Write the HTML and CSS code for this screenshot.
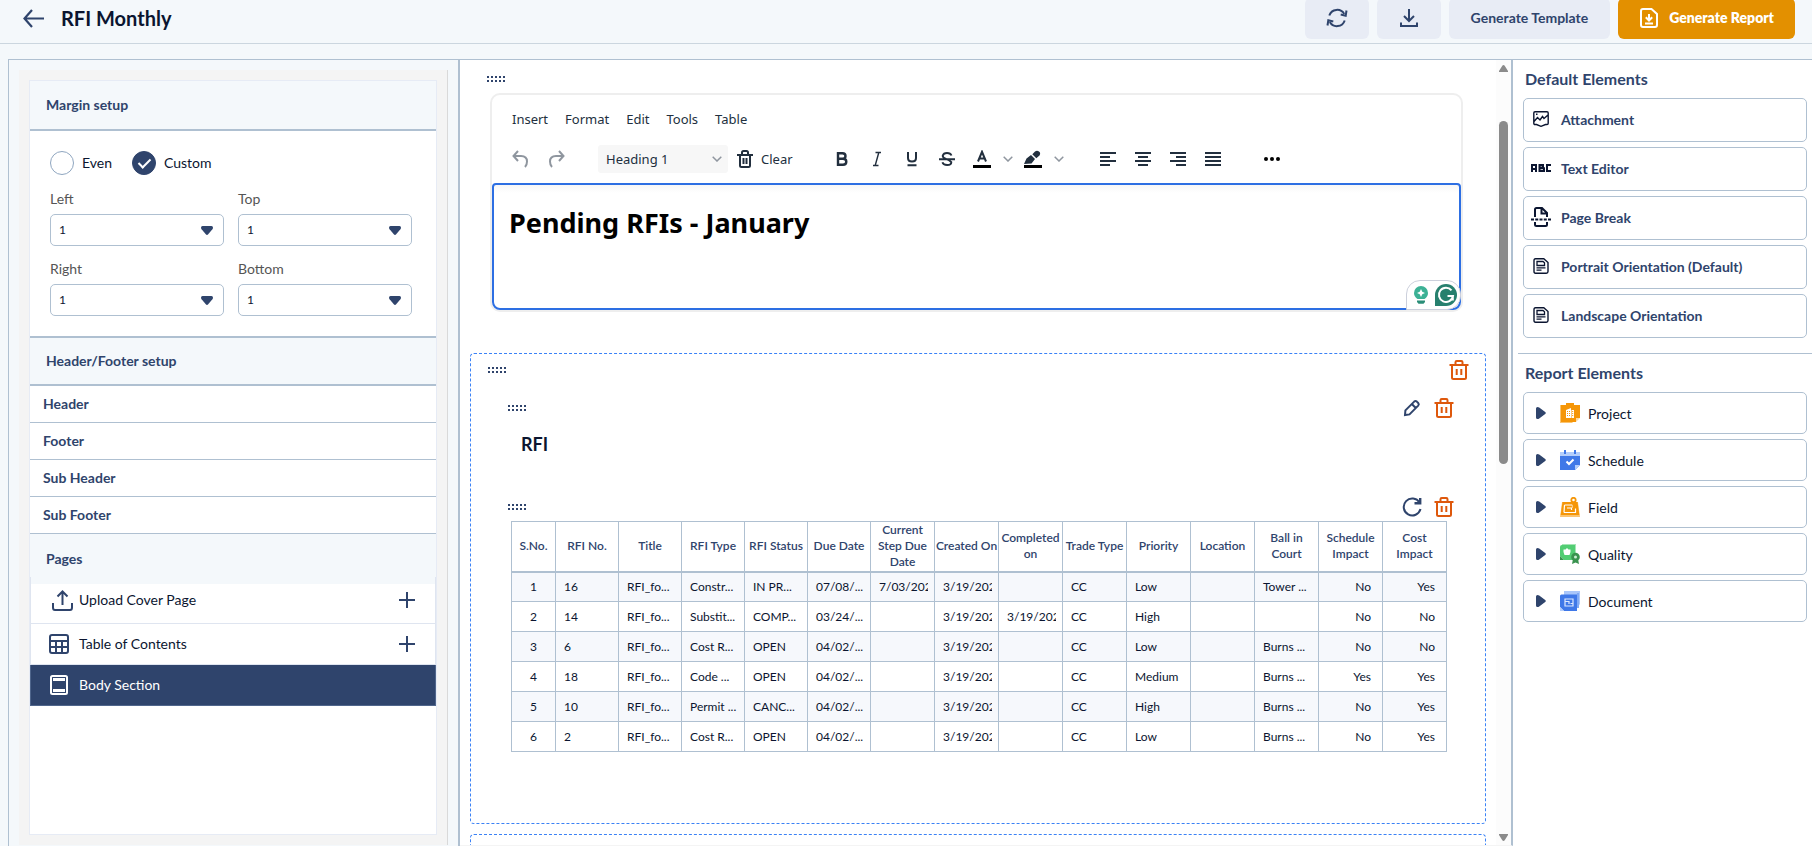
FILE: index.html
```html
<!DOCTYPE html>
<html lang="en">
<head>
  <meta charset="UTF-8" />
  <meta name="viewport" content="width=device-width, initial-scale=1.0" />
  <title>RFI Monthly</title>
  <link rel="stylesheet" href="styles.css">
</head>
<body>
  <!-- Shared icons -->
  <svg class="sprite" aria-hidden="true">
    <symbol id="i-drag" viewBox="0 0 18 6">
      <path d="M0 0h2v2H0zM4 0h2v2H4zM8 0h2v2H8zM12 0h2v2h-2zM16 0h2v2h-2zM0 4h2v2H0zM4 4h2v2H4zM8 4h2v2H8zM12 4h2v2h-2zM16 4h2v2h-2z" fill="currentColor"/>
    </symbol>
    <symbol id="i-trash" viewBox="0 0 20 20">
      <path d="M.5 5h19M6.500 5V2.200Q6.500 1 7.700 1h4.600q1.200 0 1.200 1.200V5M3 5v12.500Q3 19 4.500 19h11q1.500 0 1.500-1.500V5M7.700 9v6M12.300 9v6" fill="none" stroke="currentColor" stroke-width="2"/>
    </symbol>
    <symbol id="i-caret" viewBox="0 0 12 9">
      <path d="M1.500 0h9Q12 0 12 1.500q0 1-.6 1.800L7.200 8.300Q6 9.600 4.800 8.300L.6 3.300Q0 2.500 0 1.500 0 0 1.500 0z" fill="currentColor"/>
    </symbol>
    <symbol id="i-play" viewBox="0 0 10 12">
      <path d="M0 1.500Q0 0 1.500 0q1 0 1.700.6L9.200 5Q10.400 6 9.200 7L3.200 11.400Q2.500 12 1.500 12 0 12 0 10.500z" fill="currentColor"/>
    </symbol>
    <symbol id="i-chev" viewBox="0 0 10 6">
      <path d="M.7.700 5 5 9.300.7" fill="none" stroke="currentColor" stroke-width="1.500"/>
    </symbol>
    <symbol id="i-plus" viewBox="0 0 16 16">
      <path d="M8 0v16M0 8h16" stroke="currentColor" stroke-width="2"/>
    </symbol>
    <symbol id="i-page" viewBox="0 0 16 16">
      <path d="M2.500.8h8.300L15 4.500v9q0 1.700-1.700 1.700H2.500Q1 15.200 1 13.500v-11Q1 .8 2.500.8z" fill="none" stroke="currentColor" stroke-width="1.400"/>
      <path d="M4 3.500h6l1.500 1.300v2.700H4zM3.500 9.800h9M3.500 12.200h5" fill="none" stroke="currentColor" stroke-width="1.300"/>
    </symbol>
  </svg>

  <header class="topbar">
    <button class="back" aria-label="Back">
      <svg width="21" height="19" viewBox="0 0 21 19"><path d="M9 1 1.500 9.500 9 18M1.500 9.500H21" fill="none" stroke="currentColor" stroke-width="2.200"/></svg>
    </button>
    <h1 class="title">RFI Monthly</h1>
    <button class="btn btn-icon" aria-label="Refresh">
      <svg width="22" height="20" viewBox="0 0 22 20" fill="none" stroke="currentColor" stroke-width="2"><path d="M3.300 7.500A8.200 8.200 0 0 1 18.200 6M18.700 12.500A8.200 8.200 0 0 1 3.800 14"/><path d="M20.500 2.500 19.700 7.700 14.700 6.600M1.500 17.500l.8-5.200 5 1.100"/></svg>
    </button>
    <button class="btn btn-icon" aria-label="Download">
      <svg width="18" height="18" viewBox="0 0 18 18" fill="none" stroke="currentColor" stroke-width="2"><path d="M9 0v11.500M4 7l5 5 5-5M1 13.500V17h16v-3.500"/></svg>
    </button>
    <button class="btn">Generate Template</button>
    <button class="btn btn-report">
      <svg width="18" height="20" viewBox="0 0 18 20" fill="none" stroke="currentColor" stroke-width="2"><path d="M3 1h8.500L17 6v11q0 2-2 2H3q-2 0-2-2V3q0-2 2-2z"/><path d="M9 6v6M5.800 9.300 9 12.500l3.200-3.200M5 15.500h8"/></svg>
      Generate Report
    </button>
  </header>

  <div class="workspace">
    <aside class="setup">
      <div class="setup-inner">
        <div class="card">
          <h2 class="card-head ruled">Margin setup</h2>
          <form class="margins">
            <div class="radios">
              <input type="radio" name="margin" id="r-even" value="even"><label for="r-even">Even</label>
              <input type="radio" name="margin" id="r-custom" value="custom" checked><label for="r-custom">Custom</label>
            </div>
            <div class="fields">
              <div class="field">
                <label for="m-left">Left</label>
                <div class="select"><select id="m-left"><option>1</option></select><svg width="12" height="9"><use href="#i-caret"/></svg></div>
              </div>
              <div class="field">
                <label for="m-top">Top</label>
                <div class="select"><select id="m-top"><option>1</option></select><svg width="12" height="9"><use href="#i-caret"/></svg></div>
              </div>
              <div class="field">
                <label for="m-right">Right</label>
                <div class="select"><select id="m-right"><option>1</option></select><svg width="12" height="9"><use href="#i-caret"/></svg></div>
              </div>
              <div class="field">
                <label for="m-bottom">Bottom</label>
                <div class="select"><select id="m-bottom"><option>1</option></select><svg width="12" height="9"><use href="#i-caret"/></svg></div>
              </div>
            </div>
          </form>
          <h2 class="card-head ruled low">Header/Footer setup</h2>
          <button class="part">Header</button>
          <button class="part">Footer</button>
          <button class="part">Sub Header</button>
          <button class="part">Sub Footer</button>
          <h2 class="card-head tall">Pages</h2>
          <ul class="pages">
            <li class="page-row first">
              <svg class="upload" width="21" height="21" viewBox="0 0 21 21" fill="none" stroke="currentColor" stroke-width="2"><path d="M10.500 15V2M5.500 6.500l5-5 5 5M1 13v4.500Q1 20 3 20h15q2 0 2-2.500V13"/></svg>
              <span>Upload Cover Page</span>
              <button aria-label="Add cover page"><svg width="16" height="16"><use href="#i-plus"/></svg></button>
            </li>
            <li class="page-row">
              <svg width="20" height="20" viewBox="0 0 20 20" fill="none" stroke="currentColor" stroke-width="2"><rect x="1" y="1" width="18" height="18" rx="2"/><path d="M1 7h18M1 13h18M7 7v12M13 7v12"/></svg>
              <span>Table of Contents</span>
              <button aria-label="Add table of contents"><svg width="16" height="16"><use href="#i-plus"/></svg></button>
            </li>
            <li class="page-row active">
              <svg width="20" height="20" viewBox="0 0 20 20"><rect x="2" y="1" width="16" height="18" rx="1.500" fill="none" stroke="currentColor" stroke-width="2"/><path d="M4 3h12v3H4zM4 14h12v3H4z" fill="currentColor"/></svg>
              <span>Body Section</span>
            </li>
          </ul>
        </div>
      </div>
    </aside>

    <main class="canvas">
      <div class="blocks">
        <svg class="drag drag-editor" width="18" height="6"><use href="#i-drag"/></svg>
        <section class="editor">
          <div class="menubar">
            <button>Insert</button><button>Format</button><button>Edit</button><button>Tools</button><button>Table</button>
          </div>
          <div class="toolbar">
            <button class="tool faded" aria-label="Undo"><svg width="16" height="18" viewBox="0 0 16 18" fill="none" stroke="currentColor" stroke-width="2"><path d="M6 1 1.500 6 6 11M1.500 6H9q6 0 6 5.500Q15 15 13 17"/></svg></button>
            <button class="tool faded redo" aria-label="Redo"><svg width="16" height="18" viewBox="0 0 16 18" fill="none" stroke="currentColor" stroke-width="2"><path d="M10 1l4.500 5L10 11M14.500 6H7Q1 6 1 11.500 1 15 3 17"/></svg></button>
            <div class="select style-select"><select aria-label="Block style"><option>Heading 1</option></select><svg width="10" height="6"><use href="#i-chev"/></svg></div>
            <button class="clear"><svg width="16" height="18" viewBox="0 0 16 18" fill="none" stroke="currentColor" stroke-width="2"><path d="M0 5h16M5 5V2.500Q5 1 6.500 1h3Q11 1 11 2.500V5M3 5v10.500Q3 17 4.500 17h7q1.500 0 1.500-1.500V5M6.500 8v6M9.500 8v6"/></svg>Clear</button>
            <button class="tool" aria-label="Bold"><svg width="16" height="16" viewBox="0 0 16 16" fill="none" stroke="currentColor" stroke-width="2.400"><path d="M4 2.200h4.500q3 0 3 2.800t-3 2.800H4zM4 7.800h5q3.300 0 3.300 3T9 13.800H4zM4 1v14"/></svg></button>
            <button class="tool" aria-label="Italic"><svg width="16" height="16" viewBox="0 0 16 16" fill="none" stroke="currentColor" stroke-width="1.400"><path d="M6.500 1.500h5.500M4 14.500h5.500M9.800 1.500 6.200 14.500"/></svg></button>
            <button class="tool" aria-label="Underline"><svg width="16" height="16" viewBox="0 0 16 16" fill="none" stroke="currentColor" stroke-width="2"><path d="M4 1v6q0 3.500 4 3.500T12 7V1M3.500 14.200h9"/></svg></button>
            <button class="tool" aria-label="Strikethrough"><svg width="16" height="16" viewBox="0 0 16 16" fill="none" stroke="currentColor" stroke-width="1.900"><path d="M12.500 4.500Q11.500 2 8 2T3.700 4.800q0 2 3.300 3t5.300 3.400Q12.300 14 8.200 14T3.500 11.300M0 8.200h16"/></svg></button>
            <button class="tool" aria-label="Text color"><svg width="18" height="18" viewBox="0 0 18 18"><path d="M5 11.500 9 1.800l4 9.700M6.300 8.500h5.400" fill="none" stroke="currentColor" stroke-width="2"/><path d="M0 15h18v3H0z" fill="#000"/></svg></button>
            <button class="arrow" aria-label="Text color options"><svg width="10" height="6"><use href="#i-chev"/></svg></button>
            <button class="tool" aria-label="Highlight"><svg width="18" height="18" viewBox="0 0 18 18"><path d="M0 14l2.500-5.500L7 5l4 4-3.500 4.500zM8.300 4.300 11 1.500Q13 0 15 1.500t.5 4L12.300 8.300z" fill="currentColor"/><path d="M0 15h18v3H0z" fill="#000"/></svg></button>
            <button class="arrow" aria-label="Highlight options"><svg width="10" height="6"><use href="#i-chev"/></svg></button>
            <button class="tool apart" aria-label="Align left"><svg width="16" height="14" viewBox="0 0 16 14"><path d="M0 0h16v2H0zM0 4h10v2H0zM0 8h16v2H0zM0 12h10v2H0z" fill="currentColor"/></svg></button>
            <button class="tool" aria-label="Align center"><svg width="16" height="14" viewBox="0 0 16 14"><path d="M0 0h16v2H0zM3 4h10v2H3zM0 8h16v2H0zM3 12h10v2H3z" fill="currentColor"/></svg></button>
            <button class="tool" aria-label="Align right"><svg width="16" height="14" viewBox="0 0 16 14"><path d="M0 0h16v2H0zM6 4h10v2H6zM0 8h16v2H0zM6 12h10v2H6z" fill="currentColor"/></svg></button>
            <button class="tool" aria-label="Justify"><svg width="16" height="14" viewBox="0 0 16 14"><path d="M0 0h16v2H0zM0 4h16v2H0zM0 8h16v2H0zM0 12h16v2H0z" fill="currentColor"/></svg></button>
            <button class="tool apart" aria-label="More"><svg width="16" height="4" viewBox="0 0 16 4"><circle cx="2" cy="2" r="2"/><circle cx="8" cy="2" r="2"/><circle cx="14" cy="2" r="2"/></svg></button>
          </div>
          <div class="content" contenteditable="true" spellcheck="false"><h1>Pending RFIs - January</h1></div>
          <div class="assist">
            <svg width="16" height="20" viewBox="0 0 16 20"><path d="M8 1a7 7 0 0 1 7 7q0 3.500-3.500 6h-7Q1 11.500 1 8a7 7 0 0 1 7-7z" fill="#3cb195"/><path d="M8 4l1.300 2.700L12 8 9.300 9.300 8 12 6.700 9.300 4 8l2.700-1.300z" fill="#fff"/><path d="M4 15.500h8v1.500l-1.500 1.800h-5L4 17z" fill="#2a8e78"/></svg>
            <svg width="22" height="22" viewBox="0 0 22 22"><path d="M11 0a11 11 0 0 1 0 22H0V11A11 11 0 0 1 11 0z" fill="#27806e"/><path d="M16.500 6.300a7.100 7.100 0 1 0 1.500 5.700h-5.500M17.800 12v4.500" fill="none" stroke="#fff" stroke-width="2"/></svg>
          </div>
        </section>

        <section class="group">
          <div class="row row-group">
            <svg class="drag" width="18" height="6"><use href="#i-drag"/></svg>
            <button class="del" aria-label="Delete group"><svg width="20" height="20"><use href="#i-trash"/></svg></button>
          </div>
          <div class="row">
            <svg class="drag" width="18" height="6"><use href="#i-drag"/></svg>
            <button aria-label="Edit"><svg width="20" height="18" viewBox="0 0 20 18" fill="none" stroke="currentColor" stroke-width="2"><path d="M3 16l.4-4.600L12.200 2.600q1.300-1.200 2.600 0l1.400 1.400q1.200 1.300 0 2.600L7.500 15.400zM9.800 5l4 4"/></svg></button>
            <button class="del" aria-label="Delete heading"><svg width="20" height="20"><use href="#i-trash"/></svg></button>
          </div>
          <h2 class="group-title">RFI</h2>
          <div class="row">
            <svg class="drag" width="18" height="6"><use href="#i-drag"/></svg>
            <button aria-label="Reload"><svg width="20" height="20" viewBox="0 0 20 20" fill="none" stroke="currentColor" stroke-width="2"><path d="M17.500 5.500A8.500 8.500 0 1 0 18.500 12"/><path d="M18.200 1v5.200h-5.700" stroke-width="2.400"/></svg></button>
            <button class="del" aria-label="Delete table"><svg width="20" height="20"><use href="#i-trash"/></svg></button>
          </div>
          <table class="report">
            <colgroup><col class="c-no"><col class="c-short" span="5"><col span="9"></colgroup>
            <thead>
              <tr><th>S.No.</th><th>RFI No.</th><th>Title</th><th>RFI Type</th><th>RFI Status</th><th>Due Date</th><th>Current Step Due Date</th><th>Created On</th><th>Completed on</th><th>Trade Type</th><th>Priority</th><th>Location</th><th>Ball in Court</th><th>Schedule Impact</th><th>Cost Impact</th></tr>
            </thead>
            <tbody>
              <tr><td>1</td><td>16</td><td>RFI_fo...</td><td>Constr...</td><td>IN PR...</td><td>07/08/...</td><td><span class="date">7/03/202</span></td><td><span class="date">3/19/202</span></td><td></td><td>CC</td><td>Low</td><td></td><td>Tower ...</td><td class="r">No</td><td class="r">Yes</td></tr>
              <tr><td>2</td><td>14</td><td>RFI_fo...</td><td>Substit...</td><td>COMP...</td><td>03/24/...</td><td></td><td><span class="date">3/19/202</span></td><td><span class="date">3/19/202</span></td><td>CC</td><td>High</td><td></td><td></td><td class="r">No</td><td class="r">No</td></tr>
              <tr><td>3</td><td>6</td><td>RFI_fo...</td><td>Cost R...</td><td>OPEN</td><td>04/02/...</td><td></td><td><span class="date">3/19/202</span></td><td></td><td>CC</td><td>Low</td><td></td><td>Burns ...</td><td class="r">No</td><td class="r">No</td></tr>
              <tr><td>4</td><td>18</td><td>RFI_fo...</td><td>Code ...</td><td>OPEN</td><td>04/02/...</td><td></td><td><span class="date">3/19/202</span></td><td></td><td>CC</td><td>Medium</td><td></td><td>Burns ...</td><td class="r">Yes</td><td class="r">Yes</td></tr>
              <tr><td>5</td><td>10</td><td>RFI_fo...</td><td>Permit ...</td><td>CANC...</td><td>04/02/...</td><td></td><td><span class="date">3/19/202</span></td><td></td><td>CC</td><td>High</td><td></td><td>Burns ...</td><td class="r">No</td><td class="r">Yes</td></tr>
              <tr><td>6</td><td>2</td><td>RFI_fo...</td><td>Cost R...</td><td>OPEN</td><td>04/02/...</td><td></td><td><span class="date">3/19/202</span></td><td></td><td>CC</td><td>Low</td><td></td><td>Burns ...</td><td class="r">No</td><td class="r">Yes</td></tr>
            </tbody>
          </table>
        </section>
        <section class="group next"></section>
      </div>
      <div class="scrollbar">
        <svg width="9" height="7" viewBox="0 0 9 7"><path d="M4.500 0Q5.200 0 5.700.8L9 6v1H0V6L3.300.8Q3.800 0 4.500 0z"/></svg>
        <div class="thumb"></div>
        <svg class="down" width="9" height="7" viewBox="0 0 9 7"><path d="M4.500 7Q5.200 7 5.700 6.200L9 1V0H0v1l3.300 5.200Q3.800 7 4.500 7z"/></svg>
      </div>
    </main>

    <aside class="elements">
      <h2>Default Elements</h2>
      <div class="stack">
        <button class="element"><svg width="16" height="16" viewBox="0 0 16 16" fill="none" stroke="currentColor" stroke-width="1.400"><path d="M3.500 13.500H2q-1.200 0-1.200-1.200V2Q.8.800 2 .8h12q1.200 0 1.200 1.200v10.300q0 1.200-1.200 1.200h-1.500L8 15.300zM1 10.500l3.500-4L7 9l2.500-3.500L11 7.500l4-3.500M3 3.300h1.500"/></svg>Attachment</button>
        <button class="element"><svg class="wide" width="20" height="8" viewBox="0 0 20 8" fill="none" stroke="currentColor" stroke-width="2"><path d="M1 8V1h4v7M1 5h4M8.500 0v8M7.500 1h4.500v2.500H9M9 4.200h4V7H7.500M20 1h-4v6h4"/></svg>Text Editor</button>
        <button class="element"><svg class="wide" width="20" height="20" viewBox="0 0 20 20" fill="none" stroke="currentColor" stroke-width="2"><path d="M4 10V2.500Q4 1 5.500 1H11l5 5v4M10.500 1v5.500H16M4 15v2.500Q4 19 5.500 19h9q1.500 0 1.500-1.500V15"/><path d="M0 12.500h20" stroke-dasharray="3 1.250"/></svg>Page Break</button>
        <button class="element"><svg width="16" height="16"><use href="#i-page"/></svg>Portrait Orientation (Default)</button>
        <button class="element"><svg width="16" height="16"><use href="#i-page"/></svg>Landscape Orientation</button>
      </div>
      <hr>
      <h2>Report Elements</h2>
      <div class="stack">
        <button class="element module">
          <svg width="10" height="12"><use href="#i-play"/></svg>
          <svg width="20" height="20" viewBox="0 0 20 20"><path d="M0 2h3v15h12l-3 3H0z" fill="#fbc470"/><path d="M1 2h5V0h8v2h6v13h-4v4H1z" fill="#f59608"/><path d="M16 15h4l-4 4z" fill="#fcd9a2"/><path d="M6 7l5-2v10H6zM11.500 7H14v8h-2.500z" fill="#fff"/><path d="M7.500 8v6M9.500 8v6M12.700 8v6" stroke="#f59608" stroke-dasharray="1 1" stroke-width="1"/></svg>
          Project</button>
        <button class="element module">
          <svg width="10" height="12"><use href="#i-play"/></svg>
          <svg width="20" height="20" viewBox="0 0 20 20"><path d="M0 2h20v5H0z" fill="#b3cdfb"/><path d="M0 6h20v9l-5 5H0z" fill="#3f78e8"/><path d="M15 15h5l-5 5z" fill="#b3cdfb"/><path d="M4 0h2v4H4zM14 0h2v4h-2z" fill="#3f78e8"/><path d="M6.500 11.500l2.500 2.500 4.500-4.500" fill="none" stroke="#fff" stroke-width="2"/></svg>
          Schedule</button>
        <button class="element module">
          <svg width="10" height="12"><use href="#i-play"/></svg>
          <svg width="20" height="20" viewBox="0 0 20 20"><path d="M2 5h16l2 15H0z" fill="#fbc470"/><path d="M2.500 5h15l1.800 13H.7z" fill="#f59608"/><path d="M4.500 8h8M4 15.500h11.500v-4M4.500 8 4 15.500M7 11h4.500v2M12.500 8v3" fill="none" stroke="#fff" stroke-width="1.200"/><path d="M13.500 6v6" stroke="#f59608" stroke-width="2"/><circle cx="13.500" cy="3" r="2.200" fill="#fff" stroke="#f59608" stroke-width="1.800"/></svg>
          Field</button>
        <button class="element module">
          <svg width="10" height="12"><use href="#i-play"/></svg>
          <svg width="20" height="20" viewBox="0 0 20 20"><path d="M2 0h14v12H2z" fill="#a5e6b5"/><path d="M0 3q0-2 2-2h13v15H4l-4-4z" fill="#52cd73"/><path d="M0 12l4 4H0z" fill="#3a934f"/><path d="M7 4l1.500 1.500h2v2.500L9.500 11h-5L3.500 8V5.500h2z" fill="#fff"/><path d="M13 15l-1 5 3.500-1.500L19 20l-1-5z" fill="#3a934f"/><circle cx="15.500" cy="13" r="4.300" fill="#3a934f"/><circle cx="15.500" cy="13" r="1.500" fill="#c9efd2"/></svg>
          Quality</button>
        <button class="element module">
          <svg width="10" height="12"><use href="#i-play"/></svg>
          <svg width="20" height="20" viewBox="0 0 20 20"><path d="M4 0h16v13l-3 4H4z" fill="#a9c6fa"/><path d="M2 2h15v15h2V2z" fill="#7fa9f5"/><path d="M0 5q0-1.500 1.500-1.500H17V20H4l-4-4z" fill="#3f78e8"/><path d="M0 16l4 4H0z" fill="#b3cdfb"/><path d="M5 8h8v7H5zM5 10.500h4V13M10.500 12.500H13" fill="none" stroke="#dce8fd" stroke-width="1.200"/></svg>
          Document</button>
      </div>
    </aside>
  </div>
</body>
</html>
```

FILE: styles.css
```css
* { box-sizing: border-box; }
body {
  margin: 0;
  height: 100vh;
  overflow: hidden;
  display: flex;
  flex-direction: column;
  background: #f4f8fb;
  color: #0b1530;
  font-family: Lato, "Liberation Sans", sans-serif;
  font-size: 14px;
}
h1, h2, ul { margin: 0; padding: 0; }
button, select {
  font: inherit;
  color: inherit;
  background: none;
  border: none;
  padding: 0;
  margin: 0;
}
svg { display: block; flex: none; }
.sprite { position: absolute; width: 0; height: 0; }

/* Top bar */
.topbar {
  display: flex;
  align-items: center;
  gap: 8px;
  flex: none;
  height: 46px;
  margin-top: -2px;
  padding: 0 17px 5px 23px;
  border-bottom: 1px solid #cbd6df;
}
.back { color: #2f446c; }
.title {
  flex: 1;
  margin-left: 9px;
  font-size: 20px;
  font-weight: 700;
}
.btn {
  display: flex;
  align-items: center;
  justify-content: center;
  height: 41px;
  padding: 0 22px 1px;
  border-radius: 6px;
  background: #e8ecf5;
  color: #2f446c;
  font-weight: 700;
}
.btn-icon { width: 64px; }
.btn-report {
  gap: 11px;
  padding: 0 21px 1px 22px;
  background: #e39000;
  color: #fff;
  font-weight: 800;
}

.workspace {
  flex: 1;
  min-height: 0;
  display: flex;
  margin: 15px 0 0 8px;
  border: solid #afc0d1;
  border-width: 1px 0 0 1px;
}

/* Left panel */
.setup {
  flex: 0 0 451px;
  padding: 10px 10px 1px;
  border-right: 2px solid #afc0d1;
}
.setup-inner {
  height: 100%;
  padding: 10px;
  background: #f4f4f4;
  border-right: 1px solid #d9d9d9;
}
.card {
  height: 100%;
  background: #fff;
  border: 1px solid #e6ebf5;
}
.card-head {
  padding: 0 16px;
  line-height: 48px;
  background: #f4f8fb;
  color: #2f446c;
  font-size: 14px;
  font-weight: 700;
}
.low { line-height: 46px; }
.tall { line-height: 50px; }
.ruled { border-bottom: 2px solid #afc0d1; }
.margins {
  padding: 20px 24px 20px 20px;
  border-bottom: 2px solid #afc0d1;
}
.radios { display: flex; align-items: center; gap: 8px; }
.radios label { margin-right: 12px; padding-bottom: 2px; }
.radios input {
  appearance: none;
  width: 24px;
  height: 24px;
  margin: 0;
  border: 1px solid #8fa6c0;
  border-radius: 50%;
}
.radios input:checked { background: #2f446c; border-color: #2f446c; }
.radios input:checked::after {
  content: "";
  display: block;
  width: 5px;
  height: 10px;
  margin: 4px auto 0;
  border: solid #fff;
  border-width: 0 2px 2px 0;
  transform: rotate(45deg);
}
.fields {
  display: grid;
  grid-template-columns: 1fr 1fr;
  gap: 13px 14px;
  margin-top: 14px;
}
.field label {
  display: block;
  margin-bottom: 5px;
  line-height: 20px;
  color: #555;
}
.select { position: relative; }
.select select {
  appearance: none;
  display: block;
  width: 100%;
  height: 32px;
  padding: 0 8px 1px;
  border: 1px solid #afc0d1;
  border-radius: 5px;
  background: #fff;
  font-size: 12px;
}
.select svg {
  position: absolute;
  top: 12px;
  right: 11px;
  color: #2f446c;
  pointer-events: none;
}
.part {
  display: block;
  width: 100%;
  height: 37px;
  padding: 0 13px 2px;
  border-bottom: 1px solid #afc0d1;
  text-align: left;
  color: #2f446c;
  font-weight: 700;
}
.pages {
  list-style: none;
  margin-top: -7px;
}
.page-row {
  display: flex;
  align-items: center;
  height: 41px;
  padding: 0 20px 0 18px;
  border: 1px solid #dfe5f0;
  border-top: none;
}
.page-row.first { height: 47px; }
.page-row svg { color: #2f446c; }
.page-row span { flex: 1; margin-left: 10px; padding-bottom: 2px; }
.page-row .upload { margin-left: 3px; }
.page-row .upload + span { margin-left: 6px; }
.page-row.active {
  background: #2f446c;
  border-color: #50668c;
  color: #fff;
}
.page-row.active svg { color: #fff; }

/* Canvas */
.canvas {
  flex: 1;
  min-width: 0;
  display: flex;
  background: #fff;
  border-right: 2px solid #afc0d1;
  border-bottom: 1px solid #f4f4f4;
}
.blocks {
  flex: 1;
  min-width: 0;
  overflow: hidden;
  padding: 16px 10px 0;
}
.drag { color: #2f446c; }
.drag-editor { margin-left: 17px; }
.editor {
  position: relative;
  margin: 11px 23px 41px 20px;
  border: 2px solid #eee;
  border-radius: 10px;
  font-family: "Segoe UI", "Noto Sans", sans-serif;
  font-size: 13px;
  color: #222f3e;
}
.menubar {
  display: flex;
  gap: 17px;
  padding: 12px 20px 0;
  line-height: 24px;
}
.toolbar {
  display: flex;
  align-items: center;
  height: 52px;
  padding: 4px 0 0 10px;
}
.tool {
  width: 35px;
  display: flex;
  justify-content: center;
}
.faded, .arrow { color: #8f969f; }
.redo { margin-left: 2px; }
.style-select { width: 130px; margin: 0 9px 0 24px; }
.style-select select {
  height: 28px;
  border: none;
  border-radius: 3px;
  background: #f7f7f7;
  font-size: 13px;
}
.style-select svg { right: 6px; top: 11px; color: #8f969f; }
.clear {
  display: flex;
  align-items: center;
  gap: 8px;
  margin-right: 32px;
}
.arrow { width: 16px; display: flex; justify-content: center; }
.apart { margin-left: 24px; }
.content {
  height: 127px;
  padding: 20px 15px;
  border: 2px solid #2d6fe3;
  border-radius: 4px 4px 8px 8px;
  background: linear-gradient(#f7f7f7, #fff 8px);
  outline: none;
}
.content h1 {
  color: #000;
  font-size: 27px;
  line-height: 36px;
}
.assist {
  position: absolute;
  right: 0;
  bottom: 0;
  display: flex;
  align-items: center;
  gap: 6px;
  padding: 3px 3px 3px 6px;
  border: 1px solid #ccd0dc;
  border-radius: 14px 14px 14px 0;
  background: #fff;
}
.group {
  padding-bottom: 71px;
  border: 1px dashed #3b82f6;
  border-radius: 4px;
}
.next { height: 80px; margin-top: 10px; }
.row {
  display: flex;
  align-items: center;
  gap: 12px;
  height: 28px;
  padding: 0 31px 0 37px;
  color: #2f446c;
}
.row .drag { margin-right: auto; }
.row-group {
  height: 32px;
  margin-bottom: 8px;
  padding: 0 16px 0 17px;
}
.del { color: #de580c; }
.group-title {
  margin: 10px 50px 37px;
  font-size: 18px;
  font-weight: 700;
  line-height: 24px;
}
.report {
  width: calc(100% - 78px);
  margin-left: 40px;
  table-layout: fixed;
  border-collapse: collapse;
  font-size: 12px;
  line-height: 16px;
}
.c-no { width: 44px; }
.c-short { width: 63px; }
.report th, .report td { border: 1px solid #afc0d1; }
.report th {
  height: 50px;
  padding: 0;
  border-bottom-width: 2px;
  color: #2f446c;
  font-weight: 600;
}
.report td {
  height: 30px;
  padding: 0 6px 0 8px;
  white-space: nowrap;
}
.report td:first-child { padding: 0; text-align: center; }
.report .r { padding-right: 11px; text-align: right; }
.report tbody tr:nth-child(odd) { background: #f6f8fc; }
.date { display: block; overflow: hidden; }

.scrollbar {
  display: flex;
  flex-direction: column;
  align-items: center;
  width: 15px;
  padding: 5px 0 4px;
  background: #fcfcfc;
  fill: #8b8b8b;
}
.thumb {
  width: 9px;
  height: 343px;
  margin-top: 49px;
  border-radius: 5px;
  background: #8b8b8b;
}
.down { margin-top: auto; }

/* Right panel */
.elements {
  flex: 0 0 299px;
  padding: 7px 5px 0;
  background: #fff;
}
.elements h2 {
  padding-left: 7px;
  color: #2f446c;
  font-size: 16px;
  font-weight: 700;
  line-height: 24px;
}
.stack {
  display: flex;
  flex-direction: column;
  gap: 5px;
  margin: 7px 0 0 5px;
}
.element {
  display: flex;
  align-items: center;
  gap: 12px;
  height: 44px;
  padding: 0 9px 2px;
  border: 1px solid #afc0d1;
  border-radius: 5px;
  color: #2f446c;
  font-weight: 700;
}
.element svg { color: #0b1530; }
.element .wide { margin: 0 -2px; }
.elements hr {
  margin: 15px -5px 7px 0;
  border: none;
  border-top: 1px solid #afc0d1;
}
.module {
  height: 42px;
  padding: 0 12px;
  gap: 8px;
  color: #0b1530;
  font-size: 14px;
  font-weight: 400;
}
.module svg:first-child { margin-right: 6px; color: #2f446c; }
```
